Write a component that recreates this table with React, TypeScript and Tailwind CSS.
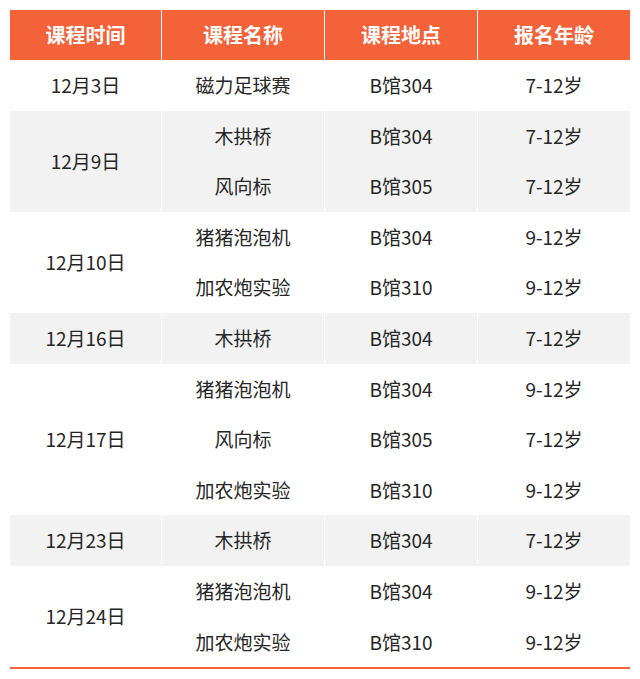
const groups = [
  { date: "12月3日", gray: false, rows: [["磁力足球赛", "B馆304", "7-12岁"]] },
  {
    date: "12月9日",
    gray: true,
    rows: [
      ["木拱桥", "B馆304", "7-12岁"],
      ["风向标", "B馆305", "7-12岁"],
    ],
  },
  {
    date: "12月10日",
    gray: false,
    rows: [
      ["猪猪泡泡机", "B馆304", "9-12岁"],
      ["加农炮实验", "B馆310", "9-12岁"],
    ],
  },
  { date: "12月16日", gray: true, rows: [["木拱桥", "B馆304", "7-12岁"]] },
  {
    date: "12月17日",
    gray: false,
    rows: [
      ["猪猪泡泡机", "B馆304", "9-12岁"],
      ["风向标", "B馆305", "7-12岁"],
      ["加农炮实验", "B馆310", "9-12岁"],
    ],
  },
  { date: "12月23日", gray: true, rows: [["木拱桥", "B馆304", "7-12岁"]] },
  {
    date: "12月24日",
    gray: false,
    rows: [
      ["猪猪泡泡机", "B馆304", "9-12岁"],
      ["加农炮实验", "B馆310", "9-12岁"],
    ],
  },
];

const headers = ["课程时间", "课程名称", "课程地点", "报名年龄"];

const App = () => {
  return (
    <div
      className="w-[640px] h-[679px] bg-white pt-[10px] px-[10px]"
      style={{ fontFamily: '"Noto Sans CJK SC", "Noto Sans", sans-serif' }}
    >
      {/* header */}
      <div className="grid grid-cols-[151px_162px_152px_152px] gap-x-px h-[50px]">
        {headers.map((h) => (
          <div
            key={h}
            className="bg-[#f4623a] text-white font-bold text-[20px] flex items-center justify-center"
          >
            {h}
          </div>
        ))}
      </div>

      {/* body */}
      {groups.map((g) => (
        <div
          key={g.date}
          className="grid grid-cols-[151px_162px_152px_152px] gap-x-px text-[19px] text-[#262626]"
        >
          <div
            className={`${g.gray ? "bg-[#f2f2f2]" : "bg-white"} flex items-center justify-center`}
            style={{ gridRow: `span ${g.rows.length}` }}
          >
            {g.date}
          </div>
          {g.rows.map((r, i) =>
            r.map((cell, j) => (
              <div
                key={`${i}-${j}`}
                className={`${g.gray ? "bg-[#f2f2f2]" : "bg-white"} h-[50.6px] flex items-center justify-center`}
              >
                {cell}
              </div>
            ))
          )}
        </div>
      ))}

      <div className="h-[2px] bg-[#f4623a] w-[620px]" />
    </div>
  );
};

export default App;
